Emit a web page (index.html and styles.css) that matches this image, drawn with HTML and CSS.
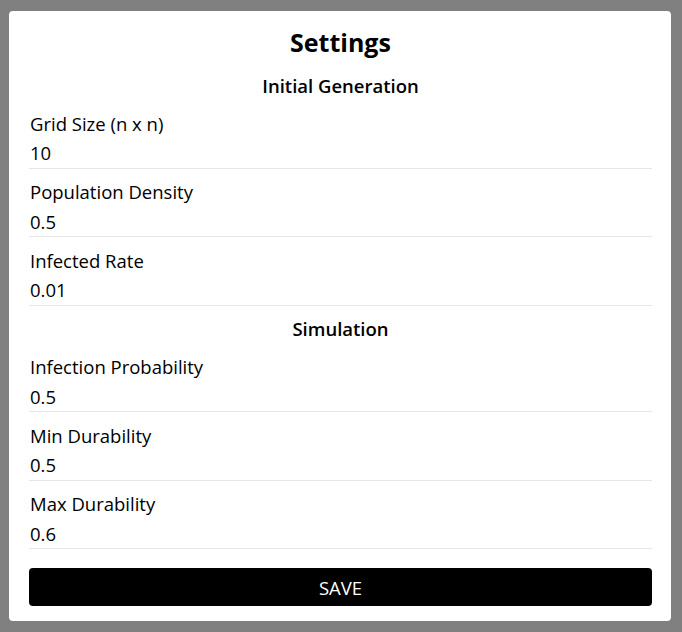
FILE: index.html
```html
<!DOCTYPE html>
<html lang="en">
<head>
<meta charset="utf-8">
<title>Settings</title>
<link rel="stylesheet" href="styles.css">
</head>
<body>
<div class="card">
  <h1 class="title">Settings</h1>
  <h2 class="section first">Initial Generation</h2>
  <div class="row">
    <label class="label" for="grid">Grid Size (n x n)</label>
    <input class="value" id="grid" type="text" value="10">
  </div>
  <div class="row">
    <label class="label" for="density">Population Density</label>
    <input class="value" id="density" type="text" value="0.5">
  </div>
  <div class="row">
    <label class="label" for="infected">Infected Rate</label>
    <input class="value" id="infected" type="text" value="0.01">
  </div>
  <h2 class="section">Simulation</h2>
  <div class="row">
    <label class="label" for="prob">Infection Probability</label>
    <input class="value" id="prob" type="text" value="0.5">
  </div>
  <div class="row">
    <label class="label" for="mindur">Min Durability</label>
    <input class="value" id="mindur" type="text" value="0.5">
  </div>
  <div class="row">
    <label class="label" for="maxdur">Max Durability</label>
    <input class="value" id="maxdur" type="text" value="0.6">
  </div>
  <button class="save" type="button">SAVE</button>
</div>
</body>
</html>
```
FILE: styles.css
```css
html, body {
  margin: 0;
  padding: 0;
  background: #808080;
}
body {
  font-family: "Open Sans", Lato, sans-serif;
  color: #000;
}
.card {
  box-sizing: border-box;
  width: 662px;
  height: 610px;
  margin: 11px 0 0 9px;
  padding: 15px 19px 15px 20px;
  background: #fff;
  border-radius: 4px;
  display: flex;
  flex-direction: column;
}
.title {
  margin: 0;
  font-size: 25px;
  line-height: 32px;
  font-weight: 700;
  text-align: center;
}
.section {
  margin: 11px 0 3px;
  font-size: 18.5px;
  line-height: 24px;
  font-weight: 600;
  text-align: center;
}
.section.first {
  margin: 16px 0 2px;
}
.row {
  display: flex;
  flex-direction: column;
  padding-top: 11.5px;
  border-bottom: 1px solid #e6e6e6;
}
.label {
  display: block;
  font-size: 18.5px;
  line-height: 24px;
  margin-bottom: 2px;
  padding-left: 1px;
}
.value {
  display: block;
  box-sizing: border-box;
  height: 30px;
  padding: 0 0 0 1px;
  margin: 0;
  border: none;
  outline: none;
  background: transparent;
  font-family: inherit;
  font-size: 18.5px;
  color: #000;
}
.save {
  margin-top: 19px;
  height: 38.5px;
  border: none;
  border-radius: 4px;
  background: #000;
  color: #fff;
  font-family: inherit;
  font-size: 18.5px;
  cursor: pointer;
}
```
